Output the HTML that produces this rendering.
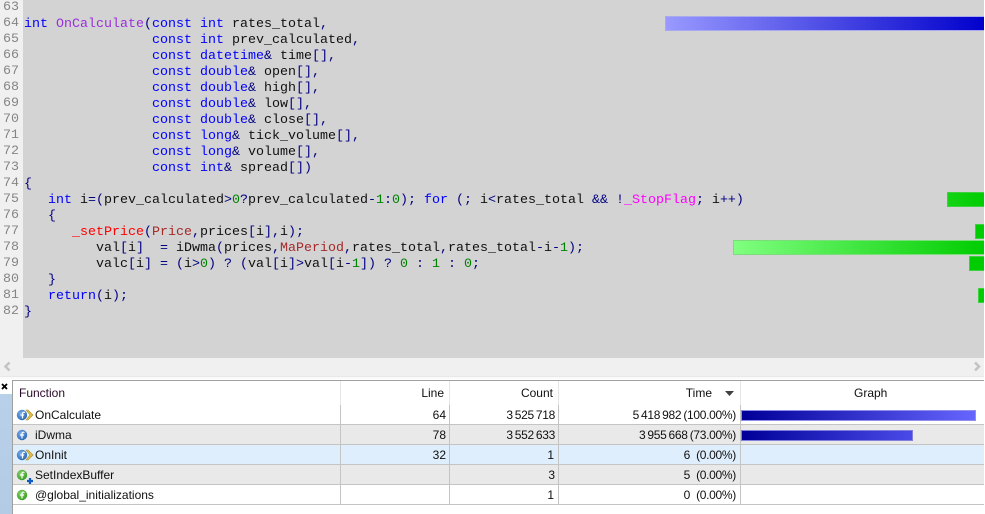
<!DOCTYPE html>
<html>
<head>
<meta charset="utf-8">
<style>
html,body{margin:0;padding:0;width:985px;height:514px;overflow:hidden;background:#fff}
.a{position:absolute}
#g{left:0;top:0;width:23px;height:358px;background:#f0f0f0}
#c{left:23px;top:0;width:962px;height:358px;background:#d3d3d3}
.n,.l{position:absolute;font:13.33px/16px "Liberation Mono",monospace;white-space:pre;height:16px}
.n{left:3px;color:#858585;margin-top:1px}
.l{left:24px;color:#101010;margin-top:4px}
b{font-weight:normal;color:#0000ff}
i{font-style:normal;color:#000080}
u{text-decoration:none;color:#008000}
.f{color:#9a30dc}
.r{color:#ff0000}
.p{color:#a52a2a}
.m{color:#ff00ff}
.bar{position:absolute;height:14px;box-sizing:border-box}
.gb{border:1px solid #3fd03f;border-right:0;background:#00cc00}
.t{position:absolute;font:12px/20px "Liberation Sans",sans-serif;color:#101010;white-space:pre;height:20px}
.ra{text-align:right}
.w{word-spacing:-1px;letter-spacing:-.3px}
.row{position:absolute;left:13px;width:972px;height:19px;border-bottom:1px solid #c4c4c4;box-sizing:content-box}
.v{position:absolute;width:1px;background:#c4c4c4;top:405px;height:100px}
.vh{position:absolute;width:1px;background:#e6e6e6;top:381px;height:24px}
svg{position:absolute;overflow:visible}
</style>
</head>
<body>
<div class="a" id="g"></div>
<div class="a" id="c"></div>

<div class="n" style="top:-1px">63</div>
<div class="n" style="top:15px">64</div>
<div class="n" style="top:31px">65</div>
<div class="n" style="top:47px">66</div>
<div class="n" style="top:63px">67</div>
<div class="n" style="top:79px">68</div>
<div class="n" style="top:95px">69</div>
<div class="n" style="top:111px">70</div>
<div class="n" style="top:127px">71</div>
<div class="n" style="top:143px">72</div>
<div class="n" style="top:159px">73</div>
<div class="n" style="top:175px">74</div>
<div class="n" style="top:191px">75</div>
<div class="n" style="top:207px">76</div>
<div class="n" style="top:223px">77</div>
<div class="n" style="top:239px">78</div>
<div class="n" style="top:255px">79</div>
<div class="n" style="top:271px">80</div>
<div class="n" style="top:287px">81</div>
<div class="n" style="top:303px">82</div>

<div class="l" style="top:13px"><b>int</b> <span class="f">OnCalculate</span><i>(</i><b>const</b> <b>int</b> rates_total<i>,</i></div>
<div class="l" style="top:29px">                <b>const</b> <b>int</b> prev_calculated<i>,</i></div>
<div class="l" style="top:45px">                <b>const</b> <b>datetime</b><i>&amp;</i> time<i>[],</i></div>
<div class="l" style="top:61px">                <b>const</b> <b>double</b><i>&amp;</i> open<i>[],</i></div>
<div class="l" style="top:77px">                <b>const</b> <b>double</b><i>&amp;</i> high<i>[],</i></div>
<div class="l" style="top:93px">                <b>const</b> <b>double</b><i>&amp;</i> low<i>[],</i></div>
<div class="l" style="top:109px">                <b>const</b> <b>double</b><i>&amp;</i> close<i>[],</i></div>
<div class="l" style="top:125px">                <b>const</b> <b>long</b><i>&amp;</i> tick_volume<i>[],</i></div>
<div class="l" style="top:141px">                <b>const</b> <b>long</b><i>&amp;</i> volume<i>[],</i></div>
<div class="l" style="top:157px">                <b>const</b> <b>int</b><i>&amp;</i> spread<i>[])</i></div>
<div class="l" style="top:173px"><i>{</i></div>
<div class="l" style="top:189px">   <b>int</b> i<i>=(</i>prev_calculated<i>&gt;</i><u>0</u><i>?</i>prev_calculated<i>-</i><u>1</u><i>:</i><u>0</u><i>);</i> <b>for</b> <i>(;</i> i<i>&lt;</i>rates_total <i>&amp;&amp; !</i><span class="m">_StopFlag</span><i>;</i> i<i>++)</i></div>
<div class="l" style="top:205px">   <i>{</i></div>
<div class="l" style="top:221px">      <span class="r">_setPrice</span><i>(</i><span class="p">Price</span><i>,</i>prices<i>[</i>i<i>],</i>i<i>);</i></div>
<div class="l" style="top:237px">         val<i>[</i>i<i>]</i>  <i>=</i> iDwma<i>(</i>prices<i>,</i><span class="p">MaPeriod</span><i>,</i>rates_total<i>,</i>rates_total<i>-</i>i<i>-</i><u>1</u><i>);</i></div>
<div class="l" style="top:253px">         valc<i>[</i>i<i>]</i> <i>=</i> <i>(</i>i<i>&gt;</i><u>0</u><i>)</i> <i>?</i> <i>(</i>val<i>[</i>i<i>]&gt;</i>val<i>[</i>i<i>-</i><u>1</u><i>])</i> <i>?</i> <u>0</u> <i>:</i> <u>1</u> <i>:</i> <u>0</u><i>;</i></div>
<div class="l" style="top:269px">   <i>}</i></div>
<div class="l" style="top:285px">   <b>return</b><i>(</i>i<i>);</i></div>
<div class="l" style="top:301px"><i>}</i></div>

<div class="bar" style="left:665px;top:16px;width:320px;height:15px;border:1px solid #a9a9f0;border-right:0;background:linear-gradient(90deg,#9999ff,#0000cc)"></div>
<div class="bar gb" style="left:947px;top:192px;width:38px;height:15px;background:linear-gradient(90deg,#14d414,#00cc00)"></div>
<div class="bar gb" style="left:975px;top:224px;width:10px;height:15px"></div>
<div class="bar" style="left:733px;top:240px;width:252px;height:15px;border:1px solid #7bdc7b;border-right:0;background:linear-gradient(90deg,#80ff80,#00cc00)"></div>
<div class="bar gb" style="left:969px;top:256px;width:16px;height:15px"></div>
<div class="bar gb" style="left:978px;top:288px;width:7px;height:15px"></div>

<!-- horizontal scrollbar -->
<div class="a" style="left:0;top:358px;width:985px;height:18px;background:#f0f0f0"></div>
<svg style="left:0;top:358px" width="985" height="18">
<path d="M9.500 4.500L5.500 8.500L9.500 12.500" fill="none" stroke="#c4c4c4" stroke-width="2.600"/>
<path d="M975 4.500L979 8.500L975 12.500" fill="none" stroke="#c4c4c4" stroke-width="2.600"/>
</svg>
<div class="a" style="left:0;top:376px;width:985px;height:3px;background:#fafafa;border-top:1px solid #e8e8e8;box-sizing:border-box"></div>

<!-- left pane -->
<div class="a" style="left:0;top:379px;width:12px;height:135px;background:#fff"></div>
<div class="a" style="left:0;top:394px;width:12px;height:120px;background:linear-gradient(180deg,#b8d0ea,#b3cbe5)"></div>
<svg style="left:0;top:380px" width="12" height="14"><path d="M2 4L7 9M7 4L2 9" stroke="#000" stroke-width="1.800" fill="none"/></svg>
<div class="a" style="left:12px;top:380px;width:1px;height:134px;background:#a0a0a0"></div>
<div class="a" style="left:12px;top:380px;width:973px;height:1px;background:#a0a0a0"></div>

<!-- rows -->
<div class="row" style="top:405px;background:#fff"></div>
<div class="row" style="top:425px;background:#e9e9e9"></div>
<div class="row" style="top:445px;background:#dfeefc"></div>
<div class="row" style="top:465px;background:#e9e9e9"></div>
<div class="row" style="top:485px;background:#fff"></div>

<div class="vh" style="left:340px"></div>
<div class="vh" style="left:449px"></div>
<div class="vh" style="left:558px"></div>
<div class="vh" style="left:740px"></div>
<div class="v" style="left:340px"></div>
<div class="v" style="left:449px"></div>
<div class="v" style="left:558px"></div>
<div class="v" style="left:740px"></div>

<!-- header -->
<div class="t" style="left:19px;top:383px;color:#2a0a2a">Function</div>
<div class="t ra" style="left:341px;width:103px;top:383px">Line</div>
<div class="t ra" style="left:450px;width:103px;top:383px">Count</div>
<div class="t ra" style="left:559px;width:153px;top:383px">Time</div>
<svg style="left:725px;top:391px" width="10" height="6"><path d="M0 0H9L4.500 5Z" fill="#404040"/></svg>
<div class="t" style="left:854px;top:383px">Graph</div>

<!-- cells -->
<div class="t" style="left:35px;top:405px">OnCalculate</div>
<div class="t" style="left:35px;top:425px">iDwma</div>
<div class="t" style="left:35px;top:445px">OnInit</div>
<div class="t" style="left:35px;top:465px">SetIndexBuffer</div>
<div class="t" style="left:35px;top:485px">@global_initializations</div>

<div class="t ra" style="left:341px;width:105px;top:405px">64</div>
<div class="t ra" style="left:341px;width:105px;top:425px">78</div>
<div class="t ra" style="left:341px;width:105px;top:445px">32</div>

<div class="t ra w" style="left:450px;width:105px;top:405px">3 525 718</div>
<div class="t ra w" style="left:450px;width:105px;top:425px">3 552 633</div>
<div class="t ra" style="left:450px;width:104px;top:445px">1</div>
<div class="t ra" style="left:450px;width:105px;top:465px">3</div>
<div class="t ra" style="left:450px;width:104px;top:485px">1</div>

<div class="t ra w" style="left:559px;width:177px;top:405px">5 418 982 (100.00%)</div>
<div class="t ra w" style="left:559px;width:177px;top:425px">3 955 668 (73.00%)</div>
<div class="t ra w" style="left:559px;width:177px;top:445px">6   (0.00%)</div>
<div class="t ra w" style="left:559px;width:177px;top:465px">5   (0.00%)</div>
<div class="t ra w" style="left:559px;width:177px;top:485px">0   (0.00%)</div>

<div class="bar" style="left:741px;top:410px;width:235px;height:11px;border:1px solid #8f8fe8;background:linear-gradient(90deg,#000099,#6666ff)"></div>
<div class="bar" style="left:741px;top:430px;width:172px;height:11px;border:1px solid #8080dc;background:linear-gradient(90deg,#000099,#4a4ae8)"></div>

<!-- icons -->
<svg style="left:0;top:0" width="40" height="514">
<defs>
<radialGradient id="bl" cx=".4" cy=".35" r=".75"><stop offset="0" stop-color="#7fb0ea"/><stop offset="1" stop-color="#1f5fb0"/></radialGradient>
<radialGradient id="gr" cx=".4" cy=".35" r=".75"><stop offset="0" stop-color="#8ad66a"/><stop offset="1" stop-color="#2e9420"/></radialGradient>
</defs>
<path d="M26 410H28L33 415L28 420H26L30 415Z" fill="#e6c040" stroke="#a08a30" stroke-width=".6"/>
<circle cx="22" cy="415" r="5.200" fill="url(#bl)"/>
<path d="M25 412.500Q22.500 411.500 22.500 414V418.500M20.500 415H24" stroke="#fff" stroke-width="1.200" fill="none"/>
<circle cx="22" cy="435" r="5.200" fill="url(#bl)"/>
<path d="M24.500 432.500Q22 431.500 22 434V438.500M20 435H24" stroke="#fff" stroke-width="1.200" fill="none"/>
<path d="M26 450H28L33 455L28 460H26L30 455Z" fill="#e6c040" stroke="#a08a30" stroke-width=".6"/>
<circle cx="22" cy="455" r="5.200" fill="url(#bl)"/>
<path d="M25 452.500Q22.500 451.500 22.500 454V458.500M20.500 455H24" stroke="#fff" stroke-width="1.200" fill="none"/>
<circle cx="22" cy="475" r="5.200" fill="url(#gr)"/>
<path d="M24.500 472.500Q22 471.500 22 474V478.500M20 475H24" stroke="#fff" stroke-width="1.200" fill="none"/>
<path d="M30 478V484M27 481H33" stroke="#0a5cc4" stroke-width="2.200" fill="none"/>
<circle cx="22" cy="495" r="5.200" fill="url(#gr)"/>
<path d="M24.500 492.500Q22 491.500 22 494V498.500M20 495H24" stroke="#fff" stroke-width="1.200" fill="none"/>
</svg>

<div class="a" style="left:984px;top:0;width:1px;height:514px;background:#fff"></div>
</body>
</html>
